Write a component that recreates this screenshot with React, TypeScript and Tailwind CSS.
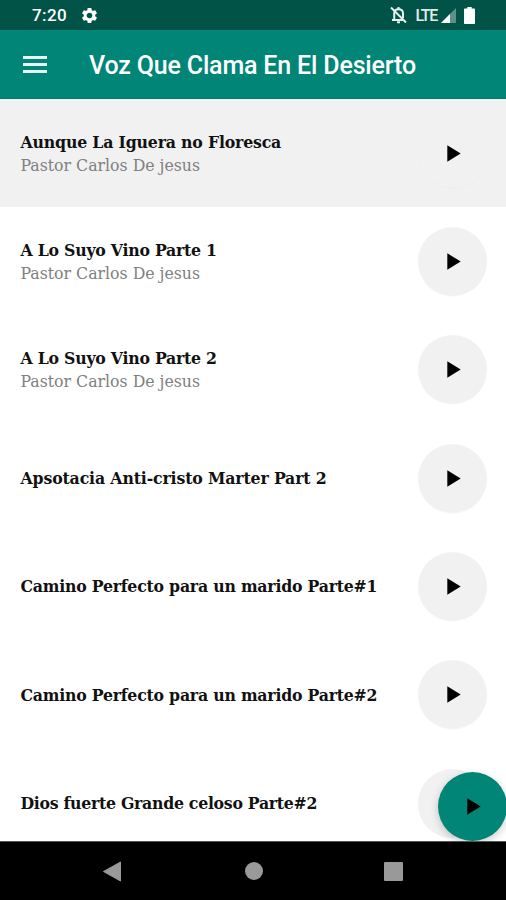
import React from "react";

type Track = { title: string; author?: string; tracking: string; active?: boolean };

const AUTHOR = "Pastor Carlos De jesus";

const tracks: Track[] = [
  { title: "Aunque La Iguera no Floresca", author: AUTHOR, tracking: "tracking-[-0.18px]", active: true },
  { title: "A Lo Suyo Vino Parte 1", author: AUTHOR, tracking: "tracking-[-0.24px]" },
  { title: "A Lo Suyo Vino Parte 2", author: AUTHOR, tracking: "tracking-[-0.24px]" },
  { title: "Apsotacia Anti-cristo Marter Part 2", tracking: "tracking-[-0.15px]" },
  { title: "Camino Perfecto para un marido Parte#1", tracking: "tracking-[-0.22px]" },
  { title: "Camino Perfecto para un marido Parte#2", tracking: "tracking-[-0.22px]" },
  { title: "Dios fuerte Grande celoso Parte#2", tracking: "tracking-[-0.28px]" },
];

const SERIF = "font-['DejaVu_Serif_Condensed','DejaVu_Serif',serif] [font-stretch:condensed]";

function PlayIcon() {
  return (
    <svg width="14" height="17" viewBox="0 0 14 17" className="ml-[3px] block">
      <path d="M0.3 0.3v16.4L13.7 8.5z" fill="#000" />
    </svg>
  );
}

function StatusBar() {
  return (
    <div className="flex h-[30px] shrink-0 items-center bg-[#005346] pl-[32px] pr-[31px] text-white">
      <span className="text-[17px] font-medium leading-[30px] tracking-[0.4px]">7:20</span>
      <svg width="19" height="19" viewBox="0 0 24 24" className="ml-[13px]" fill="#fff">
        <path d="M19.14 12.94c.04-.3.06-.61.06-.94 0-.32-.02-.64-.07-.94l2.03-1.58c.18-.14.23-.41.12-.61l-1.92-3.32c-.12-.22-.37-.29-.59-.22l-2.39.96c-.5-.38-1.03-.7-1.62-.94l-.36-2.54c-.04-.24-.24-.41-.48-.41h-3.84c-.24 0-.43.17-.47.41l-.36 2.54c-.59.24-1.13.57-1.62.94l-2.39-.96c-.22-.08-.47 0-.59.22L2.74 8.87c-.12.21-.08.47.12.61l2.03 1.58c-.05.3-.09.63-.09.94s.02.64.07.94l-2.03 1.58c-.18.14-.23.41-.12.61l1.92 3.32c.12.22.37.29.59.22l2.39-.96c.5.38 1.03.7 1.62.94l.36 2.54c.05.24.24.41.48.41h3.84c.24 0 .44-.17.47-.41l.36-2.54c.59-.24 1.13-.56 1.62-.94l2.39.96c.22.08.47 0 .59-.22l1.92-3.32c.12-.22.07-.47-.12-.61l-2.01-1.58zM12 15.6c-1.98 0-3.6-1.62-3.6-3.6s1.62-3.6 3.6-3.6 3.6 1.62 3.6 3.6-1.62 3.6-3.6 3.6z" />
      </svg>
      <svg width="17" height="18" viewBox="0 0 17 18" className="ml-auto" fill="none" stroke="#e6f0ee">
        <path d="M4.200 13.500V7.600c0-2.600 1.600-4.400 4.400-4.400s4.400 1.800 4.400 4.400V12M2 14h11" strokeWidth="2" />
        <path d="M8.500 1v2M7 16.300h3" strokeWidth="2" />
        <path d="M1 1.500l15 15" strokeWidth="2" />
      </svg>
      <span className="ml-[8px] mt-[1px] text-[16px] font-medium leading-[29px] tracking-[-1.300px] text-[#e0ecea]">LTE</span>
      <svg width="15" height="15" viewBox="0 0 15 15" className="ml-[4px]">
        <path d="M15 0v15H0z" fill="#5b9187" />
        <path d="M9 6v9H0z" fill="#fff" />
      </svg>
      <svg width="11" height="17" viewBox="0 0 10 17" preserveAspectRatio="none" className="ml-[8px]" fill="#fff">
        <path d="M3 0h4v1.500h2.200a.8.8 0 01.8.8v13.900a.8.8 0 01-.8.8H.8a.8.8 0 01-.8-.8V2.300A.8.8 0 01.8 1.500H3z" />
      </svg>
    </div>
  );
}

function AppBar() {
  return (
    <header className="flex h-[69px] shrink-0 items-center border-b border-[#00796b] bg-[#008577] pl-[23px] text-white">
      <button className="flex w-[24px] flex-col gap-[4px]" aria-label="Menu">
        <span className="h-[3px] w-full bg-[#e9f5f3]" />
        <span className="h-[3px] w-full bg-[#e9f5f3]" />
        <span className="h-[3px] w-full bg-[#e9f5f3]" />
      </button>
      <h1 className="ml-[42px] mt-[4px] whitespace-nowrap text-[25px] font-medium leading-[30px] tracking-[-0.17px]">
        Voz Que Clama En El Desierto
      </h1>
    </header>
  );
}

function TrackRow({ track }: { track: Track }) {
  return (
    <li
      className={
        "flex h-[108.33px] shrink-0 items-center justify-between pl-[20.500px] pr-[19px] " +
        (track.active ? "bg-[#f1f1f1]" : "bg-white")
      }
    >
      <div className={SERIF}>
        <div className="whitespace-nowrap text-[17.500px] font-bold leading-[24px] text-[#111]">
          <span className={track.tracking}>{track.title}</span>
        </div>
        {track.author && (
          <div className="whitespace-nowrap text-[17.500px] leading-[23px] text-[#808080]">
            <span>{track.author}</span>
          </div>
        )}
      </div>
      <button
        className="flex size-[69px] items-center justify-center rounded-full bg-[#f1f1f1] shadow-[0_1px_1px_rgba(0,0,0,0.02)]"
        aria-label="Play"
      >
        <PlayIcon />
      </button>
    </li>
  );
}

function NavBar() {
  return (
    <nav className="flex h-[59px] shrink-0 items-center border-t border-[#555] bg-black pl-[102px] pr-[103px]">
      <svg width="19" height="21" viewBox="0 0 19 21">
        <path d="M18.500 1v19L1.500 10.500z" fill="#999" stroke="#999" strokeWidth="1" strokeLinejoin="round" />
      </svg>
      <span className="ml-[124px] size-[18px] rounded-full bg-[#9a9a9a]" />
      <span className="ml-auto size-[19px] rounded-[1px] bg-[#999]" />
    </nav>
  );
}

export default function App() {
  return (
    <div className="relative flex h-[900px] w-[506px] flex-col overflow-hidden bg-white font-[Roboto,sans-serif]">
      <StatusBar />
      <AppBar />
      <div className="relative min-h-0 flex-1 overflow-hidden">
        <ul className="flex flex-col">
          {tracks.map((track) => (
            <TrackRow key={track.title} track={track} />
          ))}
        </ul>
        <button
          className="absolute -right-px bottom-0 flex size-[69px] items-center justify-center rounded-full bg-[#008577] shadow-[0_3px_8px_rgba(0,0,0,0.2)]"
          aria-label="Play"
        >
          <PlayIcon />
        </button>
      </div>
      <NavBar />
    </div>
  );
}
